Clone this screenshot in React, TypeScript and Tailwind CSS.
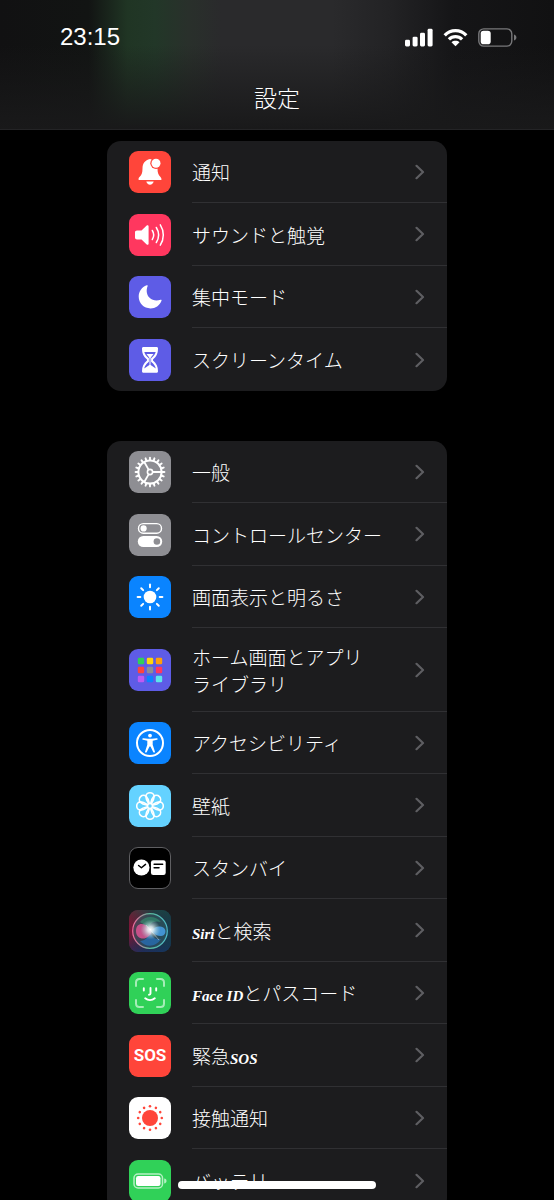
import type { ReactNode } from "react";

type Item = {
  label: ReactNode;
  tile: string;
  icon: ReactNode;
  tall?: boolean;
};

function Glyph({ children }: { children: ReactNode }) {
  return (
    <svg viewBox="0 0 42 42" className="h-full w-full" fill="none" aria-hidden="true">
      {children}
    </svg>
  );
}

function Script({ children }: { children: ReactNode }) {
  return <span className="font-['Liberation_Serif',serif] text-[15px] leading-none font-bold italic">{children}</span>;
}

const steps = (n: number) => Array.from({ length: n }, (_, i) => (i * 360) / n);

const homeDots = [
  "#30d158", "#ffd60a", "#ff9f0a",
  "#ff453a", "#8e8e93", "#ff375f",
  "#bf5af2", "#0a84ff", "#5ee6eb",
];

const alerts: Item[] = [
  {
    label: "通知",
    tile: "bg-[#ff453a]",
    icon: (
      <Glyph>
        <path
          d="M21 8c-5 1-7.500 4.500-7.500 9.500 0 4.500-1 6.500-3 8.500-.8.800-1 1.500-1 2.200 0 .6.400.9 1 .9h21c.6 0 1-.3 1-.9 0-.7-.3-1.400-1-2.200-2-2-3-4-3-8.500C28.500 12.500 26 9 21 8z"
          fill="#fff"
        />
        <path d="M17.300 30.500h7.400c-.5 2-1.900 3.200-3.700 3.200s-3.200-1.200-3.700-3.200z" fill="#fff" />
        <circle cx="27" cy="12.200" r="5.700" fill="#ff453a" />
        <circle cx="27" cy="12.200" r="4.500" fill="#fff" />
      </Glyph>
    ),
  },
  {
    label: "サウンドと触覚",
    tile: "bg-[#ff375f]",
    icon: (
      <Glyph>
        <path d="M8 16.500h4.500l5.200-5c.8-.7 1.900-.3 1.900.8v17.400c0 1.100-1.100 1.500-1.900.8l-5.200-5H8c-1.200 0-2-.7-2-1.900v-5.200c0-1.200.8-1.900 2-1.900z" fill="#fff" />
        <g stroke="#fff" strokeWidth="1.500" strokeLinecap="round">
          <path d="M23.300 16.500c1.700 2.700 1.700 6.300 0 9" />
          <path d="M27.300 13.500c2.800 4.500 2.800 10.500 0 15" />
          <path d="M31.300 10.800c4 6.200 4 14.200 0 20.400" />
        </g>
      </Glyph>
    ),
  },
  {
    label: "集中モード",
    tile: "bg-[#5e5ce6]",
    icon: (
      <Glyph>
        <path
          d="M17.700 9.300c.7-.3 1.200.2.900.9-1.700 4.200-.9 8.700 2 11.600 2.900 2.900 7.100 3.500 10.900 2 .8-.3 1.300.2 1 .9-1.900 4.800-6 7.700-11 7.700-6.600 0-11.800-5.100-11.800-11.600 0-5.200 3.100-9.600 8-11.500z"
          fill="#fff"
        />
      </Glyph>
    ),
  },
  {
    label: "スクリーンタイム",
    tile: "bg-[#5e5ce6]",
    icon: (
      <Glyph>
        <path
          fillRule="evenodd"
          d="M14.500 8h13c1 0 1.500.6 1.500 1.500 0 5-1.500 7.800-5 11v1c3.500 3.200 5 6 5 10.700 0 .9-.5 1.500-1.500 1.500h-13c-1 0-1.500-.6-1.500-1.500 0-4.700 1.500-7.500 5-10.700v-1c-3.500-3.200-5-6-5-11C13 8.600 13.500 8 14.500 8zM15.300 13c.7 2.400 2 4.200 4.600 6.300v3.400c-3 2.400-4.300 4.500-4.700 6.900l4.800-3.300c.7-.5 1.300-.5 2 0l4.800 3.300c-.4-2.400-1.700-4.500-4.700-6.900v-3.400c2.600-2.100 3.900-3.900 4.600-6.300z"
          fill="#fff"
        />
        <path d="M17.500 15h7L21 19.500z" fill="#fff" />
        <path d="M21 18v9" stroke="#fff" strokeWidth="1" />
      </Glyph>
    ),
  },
];

const general: Item[] = [
  {
    label: "一般",
    tile: "bg-[#8e8e93]",
    icon: (
      <Glyph>
        <g stroke="#fff">
          <circle cx="21" cy="21" r="11.600" strokeWidth="2" />
          {steps(20).map((a) => (
            <path key={a} d="M21 8.800V6.600" strokeWidth="1.900" strokeLinecap="round" transform={`rotate(${a} 21 21)`} />
          ))}
          <circle cx="21" cy="21" r="2.600" strokeWidth="1.600" />
          {[90, 210, 330].map((a) => (
            <path key={a} d="M21 18.200V9.500" strokeWidth="1.800" transform={`rotate(${a} 21 21)`} />
          ))}
        </g>
      </Glyph>
    ),
  },
  {
    label: "コントロールセンター",
    tile: "bg-[#8e8e93]",
    icon: (
      <Glyph>
        <rect x="9.500" y="9.600" width="23" height="9.600" rx="4.800" stroke="#fff" strokeWidth="1.400" />
        <circle cx="14.600" cy="14.400" r="3.100" fill="#fff" />
        <rect x="8.800" y="22" width="24.400" height="11" rx="5.500" fill="#fff" />
        <circle cx="27.900" cy="27.500" r="3.300" fill="#8e8e93" />
      </Glyph>
    ),
  },
  {
    label: "画面表示と明るさ",
    tile: "bg-[#0a84ff]",
    icon: (
      <Glyph>
        <circle cx="21" cy="21" r="6.300" fill="#fff" />
        {steps(8).map((a) => (
          <path key={a} d="M21 11.300V8.600" stroke="#fff" strokeWidth="2" strokeLinecap="round" transform={`rotate(${a} 21 21)`} />
        ))}
      </Glyph>
    ),
  },
  {
    label: (
      <>
        ホーム画面とアプリ
        <br />
        ライブラリ
      </>
    ),
    tile: "bg-[#5e5ce6]",
    tall: true,
    icon: (
      <Glyph>
        {homeDots.map((fill, i) => (
          <rect key={fill} x={8.800 + (i % 3) * 9} y={8.800 + Math.floor(i / 3) * 9} width="6.400" height="6.400" rx="1.300" fill={fill} />
        ))}
      </Glyph>
    ),
  },
  {
    label: "アクセシビリティ",
    tile: "bg-[#0a84ff]",
    icon: (
      <Glyph>
        <circle cx="21" cy="21" r="13" stroke="#fff" strokeWidth="2" />
        <circle cx="21" cy="13.600" r="1.900" fill="#fff" />
        <path
          d="M14.300 16.200l4.700.6h4l4.700-.6c1.200-.2 1.400 1.300.3 1.600l-4.300.9v4.100l2.200 6.600c.4 1.200-1.200 1.700-1.700.6L21.500 24.500h-1L17.800 30c-.5 1.100-2.100.6-1.700-.6l2.200-6.600v-4.100l-4.300-.9c-1.100-.3-.9-1.800.3-1.600z"
          fill="#fff"
        />
      </Glyph>
    ),
  },
  {
    label: "壁紙",
    tile: "bg-[#64d2ff]",
    icon: (
      <Glyph>
        <g stroke="#fff" strokeWidth="1.600">
          {steps(8).map((a) => (
            <path
              key={a}
              d="M21 21c-1-2.700-4.100-5.400-4.100-9.200a4.100 4.100 0 0 1 8.200 0c0 3.800-3.100 6.500-4.100 9.200z"
              transform={`rotate(${a} 21 21)`}
            />
          ))}
          <circle cx="21" cy="21" r="2.500" fill="#64d2ff" />
        </g>
      </Glyph>
    ),
  },
  {
    label: "スタンバイ",
    tile: "bg-black border border-[#5f5f62]",
    icon: (
      <Glyph>
        <circle cx="12" cy="20.500" r="8.500" fill="#fff" />
        <path d="M9 18.300l3 2.500 4.300-3.600" stroke="#000" strokeWidth="1.500" strokeLinecap="round" strokeLinejoin="round" />
        <rect x="22" y="12.800" width="15.500" height="15.500" rx="2.400" fill="#fff" />
        <path d="M25.300 17h9M25.300 20.700h5.200" stroke="#000" strokeWidth="1.500" strokeLinecap="round" />
      </Glyph>
    ),
  },
  {
    label: (
      <>
        <Script>Siri</Script>と検索
      </>
    ),
    tile: "bg-[#25243a]",
    icon: (
      <Glyph>
        <defs>
          <linearGradient id="siri-bg" x1="0" y1="0.300" x2="1" y2="0.600">
            <stop offset="0" stopColor="#8c1238" />
            <stop offset="0.500" stopColor="#28304a" />
            <stop offset="1" stopColor="#124152" />
          </linearGradient>
          <linearGradient id="siri-shade" x1="0" y1="0" x2="0" y2="1">
            <stop offset="0" stopColor="#14503c" stopOpacity="0.500" />
            <stop offset="0.500" stopColor="#222" stopOpacity="0" />
            <stop offset="1" stopColor="#182c66" stopOpacity="0.600" />
          </linearGradient>
          <linearGradient id="siri-ring" x1="0" y1="0.500" x2="1" y2="0.500">
            <stop offset="0" stopColor="#f0659a" />
            <stop offset="0.500" stopColor="#58b99a" />
            <stop offset="1" stopColor="#4fb8c8" />
          </linearGradient>
          <radialGradient id="siri-glow">
            <stop offset="0" stopColor="#fff" />
            <stop offset="0.300" stopColor="#e8f4f6" stopOpacity="0.850" />
            <stop offset="1" stopColor="#9cc8cc" stopOpacity="0" />
          </radialGradient>
        </defs>
        <rect width="42" height="42" fill="url(#siri-bg)" />
        <rect width="42" height="42" fill="url(#siri-shade)" />
        <circle cx="21" cy="21" r="17.300" fill="#37656c" fillOpacity="0.450" stroke="url(#siri-ring)" strokeWidth="1.200" />
        <path d="M11 12c5-6 15-7 21 0-6-2-14 1-11 9-3-4-6-7-10-9z" fill="#35a478" fillOpacity="0.500" />
        <path d="M21 21c1 6 6 9 11 8-5 8-15 9-21 2 5 0 9-4 10-10z" fill="#2777c5" fillOpacity="0.650" />
        <path d="M7 21c0-8 8-10 14-1.500C24 24 20 26 17 28c-5 2-10-1-10-7z" fill="#f0569b" fillOpacity="0.750" />
        <path d="M22 21c3-4 8-6 13-3 3 3 1 8-3 8-4 0-7-2-10-5z" fill="#4aa5f0" fillOpacity="0.800" />
        <circle cx="21.500" cy="19.500" r="10" fill="url(#siri-glow)" />
        <path d="M17 15l13 15" stroke="#fff" strokeOpacity="0.500" strokeWidth="0.800" />
      </Glyph>
    ),
  },
  {
    label: (
      <>
        <Script>Face ID</Script>とパスコード
      </>
    ),
    tile: "bg-[#30d158]",
    icon: (
      <Glyph>
        <g stroke="#a5edb7" strokeWidth="2" strokeLinecap="round">
          {steps(4).map((a) => (
            <path key={a} d="M7 14v-3.500C7 8 8 7 10.500 7H14" transform={`rotate(${a} 21 21)`} />
          ))}
        </g>
        <g stroke="#fff" strokeWidth="1.900" strokeLinecap="round" strokeLinejoin="round">
          <path d="M14.800 16.200v2.300M27.200 16.200v2.300" />
          <path d="M21.500 16v5.500c0 .8-.5 1.200-1.500 1.200" />
          <path d="M16.200 26.300c2.800 2.400 6.800 2.400 9.600 0" />
        </g>
      </Glyph>
    ),
  },
  {
    label: (
      <>
        緊急<Script>SOS</Script>
      </>
    ),
    tile: "bg-[#ff453a]",
    icon: <span className="font-[Roboto,sans-serif] text-[17px] leading-none font-bold text-white">SOS</span>,
  },
  {
    label: "接触通知",
    tile: "bg-white",
    icon: (
      <Glyph>
        <circle cx="21" cy="21" r="8" fill="#ff453a" />
        {steps(12).map((a) => (
          <circle key={a} cx="21" cy="9.200" r="1.300" fill="#ff453a" transform={`rotate(${a} 21 21)`} />
        ))}
      </Glyph>
    ),
  },
  {
    label: "バッテリー",
    tile: "bg-[#30d158]",
    icon: (
      <Glyph>
        <rect x="5" y="14" width="28.500" height="14" rx="4" stroke="#b5f0c4" strokeWidth="1.500" />
        <rect x="7" y="16" width="24.500" height="10" rx="2.200" fill="#fff" />
        <path d="M35.200 18.500c1.500.3 2.300 1.200 2.300 2.500s-.8 2.200-2.300 2.500z" fill="#b5f0c4" />
      </Glyph>
    ),
  },
];

function StatusBar() {
  return (
    <div className="flex h-[74px] items-center justify-between pr-[37px] pl-[60px] text-white">
      <time className="font-['Liberation_Sans',sans-serif] text-[24px] leading-6">23:15</time>
      <div className="flex items-center gap-[10px]">
        <svg width="28" height="19" viewBox="0 0 28 19" fill="#fff" aria-label="電波">
          <rect x="0" y="11.800" width="5" height="6.700" rx="1.400" />
          <rect x="7.600" y="8.700" width="5" height="9.800" rx="1.400" />
          <rect x="15" y="4.800" width="5" height="13.700" rx="1.400" />
          <rect x="22.600" y="0.800" width="5" height="17.700" rx="1.400" />
        </svg>
        <svg width="25" height="19" viewBox="0 0 25 19" fill="none" aria-label="Wi-Fi">
          <g stroke="#fff" strokeWidth="3.300">
            <path d="M1.700 7.300C7.800 1.100 17.200 1.100 23.300 7.300" />
            <path d="M5.900 11.400c3.800-3.700 9.400-3.700 13.200 0" />
          </g>
          <path d="M12.500 18.300l-4-4.100c2.300-1.900 5.700-1.900 8 0z" fill="#fff" />
        </svg>
        <svg width="39" height="19" viewBox="0 0 39 19" fill="none" aria-label="バッテリー残量">
          <rect x="0.800" y="0.900" width="33" height="17.200" rx="5" stroke="#78787a" strokeWidth="1.400" />
          <rect x="2.700" y="2.800" width="10" height="13.400" rx="2.800" fill="#fff" />
          <path d="M36 6.500c1.600.5 2.400 1.600 2.400 3s-.8 2.500-2.400 3z" fill="#78787a" />
        </svg>
      </div>
    </div>
  );
}

function Row({ item }: { item: Item }) {
  return (
    <li className={`group ${item.tall ? "h-[84px]" : "odd:h-[62px] even:h-[63px]"}`}>
      <a href="#" className="flex h-full items-center gap-[21px] pl-[22px]">
        <span className={`flex size-[42px] shrink-0 items-center justify-center overflow-hidden rounded-[9px] ${item.tile}`}>
          {item.icon}
        </span>
        <span className="flex h-full flex-1 items-center justify-between border-b border-[#303033] pr-[22px] group-last:border-b-0">
          <span className="text-[19px] leading-[27px] font-light whitespace-nowrap text-white">{item.label}</span>
          <svg width="10" height="16" viewBox="0 0 10 16" fill="none" className="shrink-0" aria-hidden="true">
            <path d="M1.500 1.800L8 8l-6.500 6.200" stroke="#5e5e62" strokeWidth="2.200" strokeLinecap="round" strokeLinejoin="round" />
          </svg>
        </span>
      </a>
    </li>
  );
}

function Group({ items }: { items: Item[] }) {
  return (
    <ul className="mx-auto w-full max-w-[340px] overflow-hidden rounded-[14px] bg-[#1c1c1e]">
      {items.map((item, i) => (
        <Row key={i} item={item} />
      ))}
    </ul>
  );
}

export default function App() {
  return (
    <div className="flex h-screen flex-col bg-black font-['Noto_Sans_CJK_JP',sans-serif]">
      <header className="shrink-0 border-b border-[#242426] bg-[linear-gradient(to_bottom,transparent_35%,#19191a_100%),linear-gradient(to_right,#111112_0%,#121413_16%,#203524_23%,#223728_28%,#29302b_34%,#2a2a2c_40%,#2a2a2c_60%,#232325_70%,#151517_82%,#111112_100%)]">
        <StatusBar />
        <h1 className="flex h-[55px] items-start justify-center text-[23px] leading-[46px] font-light text-white">設定</h1>
      </header>
      <main className="flex min-h-0 flex-1 flex-col gap-[50px] overflow-y-auto pt-[11px] [scrollbar-width:none] *:shrink-0">
        <Group items={alerts} />
        <Group items={general} />
      </main>
      <div className="fixed inset-x-0 bottom-[11px] mx-auto h-2 w-[198px] rounded-full bg-white" />
    </div>
  );
}
